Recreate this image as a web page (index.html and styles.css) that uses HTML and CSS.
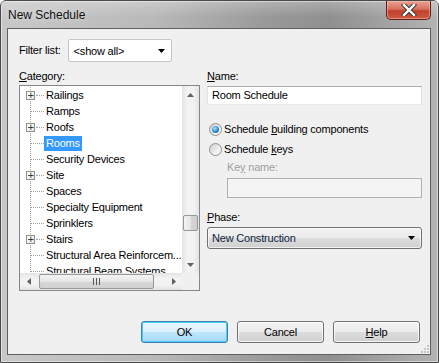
FILE: index.html
```html
<!DOCTYPE html>
<html lang="en">
<head>
    <meta charset="UTF-8">
    <meta name="viewport" content="width=device-width, initial-scale=1.0">
    <title>New Schedule</title>
    <link rel="stylesheet" href="styles.css">
</head>
<body>
    <div class="window">
        <div class="titlebar">
            <span class="title">New Schedule</span>
            <span class="close-btn">
                <svg width="16" height="12" viewBox="0 0 16 12">
                    <path d="M3 1 L13 11 M13 1 L3 11" stroke="#3a3a3a" stroke-width="4.4" stroke-linecap="square"/>
                    <path d="M3 1 L13 11 M13 1 L3 11" stroke="#ffffff" stroke-width="2.4" stroke-linecap="square"/>
                </svg>
            </span>
        </div>
        <div class="client">
            <div class="filter-row">
                <span class="label">Filter list:</span>
                <div class="combo">
                    <span>&lt;show all&gt;</span>
                    <svg class="arrow" width="7" height="4" viewBox="0 0 7 4"><path d="M0 0 H7 L3.5 4 Z" fill="#000"/></svg>
                </div>
            </div>

            <div class="main">
                <div class="left-col">
                    <div class="label cat-label"><u>C</u>ategory:</div>
                    <div class="tree">
                        <div class="tree-view">
                            <div class="tree-rows">
                                <div class="row"><span class="branch"><span class="expander">+</span><span class="hline"></span></span><span class="item">Railings</span></div>
                                <div class="row"><span class="branch leaf"><span class="hline"></span></span><span class="item">Ramps</span></div>
                                <div class="row"><span class="branch"><span class="expander">+</span><span class="hline"></span></span><span class="item">Roofs</span></div>
                                <div class="row"><span class="branch leaf"><span class="hline"></span></span><span class="item selected">Rooms</span></div>
                                <div class="row"><span class="branch leaf"><span class="hline"></span></span><span class="item">Security Devices</span></div>
                                <div class="row"><span class="branch"><span class="expander">+</span><span class="hline"></span></span><span class="item">Site</span></div>
                                <div class="row"><span class="branch leaf"><span class="hline"></span></span><span class="item">Spaces</span></div>
                                <div class="row"><span class="branch leaf"><span class="hline"></span></span><span class="item">Specialty Equipment</span></div>
                                <div class="row"><span class="branch leaf"><span class="hline"></span></span><span class="item">Sprinklers</span></div>
                                <div class="row"><span class="branch"><span class="expander">+</span><span class="hline"></span></span><span class="item">Stairs</span></div>
                                <div class="row"><span class="branch leaf"><span class="hline"></span></span><span class="item">Structural Area Reinforcem...</span></div>
                                <div class="row"><span class="branch leaf"><span class="hline"></span></span><span class="item">Structural Beam Systems</span></div>
                            </div>
                        </div>
                        <div class="vscroll">
                            <span class="sb-btn"><svg width="7" height="4" viewBox="0 0 7 4"><path d="M0 4 H7 L3.5 0 Z" fill="#606060"/></svg></span>
                            <div class="sb-track">
                                <span class="sb-thumb v-thumb" style="margin-top: 112px"></span>
                            </div>
                            <span class="sb-btn"><svg width="7" height="4" viewBox="0 0 7 4"><path d="M0 0 H7 L3.5 4 Z" fill="#606060"/></svg></span>
                        </div>
                        <div class="hscroll">
                            <span class="sb-btn"><svg width="4" height="7" viewBox="0 0 4 7"><path d="M4 0 V7 L0 3.5 Z" fill="#606060"/></svg></span>
                            <div class="sb-track h-track">
                                <span class="sb-thumb h-thumb" style="width: 115px">
                                    <span class="grip-lines"></span>
                                </span>
                            </div>
                            <span class="sb-btn"><svg width="4" height="7" viewBox="0 0 4 7"><path d="M0 0 V7 L4 3.5 Z" fill="#606060"/></svg></span>
                        </div>
                        <div class="corner"></div>
                    </div>
                </div>

                <div class="right-col">
                    <div class="label"><u>N</u>ame:</div>
                    <div class="textbox">Room Schedule</div>

                    <div class="radio-row first">
                        <span class="radio checked"><span class="dot"></span></span>
                        <span>Schedule <u>b</u>uilding components</span>
                    </div>
                    <div class="radio-row">
                        <span class="radio"></span>
                        <span>Schedule <u>k</u>eys</span>
                    </div>

                    <div class="key-block">
                        <div class="label disabled">Ke<u>y</u> name:</div>
                        <div class="textbox disabled-box"></div>
                    </div>

                    <div class="label phase-label"><u>P</u>hase:</div>
                    <div class="dropdown">
                        <span>New Construction</span>
                        <svg class="arrow" width="7" height="4" viewBox="0 0 7 4"><path d="M0 0 H7 L3.5 4 Z" fill="#000"/></svg>
                    </div>
                </div>
            </div>

            <div class="buttons">
                <button class="btn default">OK</button>
                <button class="btn">Cancel</button>
                <button class="btn"><u>H</u>elp</button>
            </div>

            <svg class="size-grip" width="10" height="10" viewBox="0 0 10 10">
                <rect x="8" y="2" width="2" height="2" fill="#c4c4c4"/>
                <rect x="5" y="5" width="2" height="2" fill="#c4c4c4"/>
                <rect x="8" y="5" width="2" height="2" fill="#c4c4c4"/>
                <rect x="2" y="8" width="2" height="2" fill="#c4c4c4"/>
                <rect x="5" y="8" width="2" height="2" fill="#c4c4c4"/>
                <rect x="8" y="8" width="2" height="2" fill="#c4c4c4"/>
            </svg>
        </div>
    </div>
</body>
</html>
```

FILE: styles.css
```css
body {
    margin: 0;
    padding: 0;
    font-family: "Liberation Sans", Arial, sans-serif;
    font-size: 11px;
    letter-spacing: -0.2px;
    color: #000;
    background-color: #ffffff;
}

.window {
    width: 439px;
    height: 363px;
    box-sizing: border-box;
    border: 1px solid #4a4a4a;
    border-radius: 6px 6px 0 0;
    display: flex;
    flex-direction: column;
    background: linear-gradient(to right, #c8c8c8 0%, #b9b9b9 35%, #9a9a9a 60%, #8f8f8f 75%, #b3b3b3 100%);
    box-shadow: inset 0 0 0 1px rgba(255, 255, 255, 0.45);
}

.titlebar {
    height: 27px;
    display: flex;
    align-items: flex-start;
    background: linear-gradient(to bottom, rgba(255, 255, 255, 0.25), rgba(255, 255, 255, 0) 60%);
}

.title {
    margin: 7px 0 0 7px;
    font-size: 12px;
    line-height: 15px;
    letter-spacing: 0;
    color: #111;
    text-shadow: 0 0 6px rgba(255, 255, 255, 0.7);
}

.close-btn {
    margin-left: auto;
    margin-right: 7px;
    width: 45px;
    height: 19px;
    box-sizing: border-box;
    border: 1px solid #5e2219;
    border-top: none;
    border-radius: 0 0 5px 5px;
    background: linear-gradient(to bottom, #e9a394 0%, #d8705e 45%, #c0402b 55%, #cf5a43 100%);
    box-shadow: inset 0 0 0 1px rgba(255, 200, 190, 0.5);
    display: flex;
    align-items: center;
    justify-content: center;
}

.client {
    position: relative;
    flex: 1;
    margin: 0 7px 7px 6px;
    border: 1px solid #5f5f5f;
    background-color: #f0f0f0;
    padding: 10px 8px 0 11px;
    display: flex;
    flex-direction: column;
}

.label {
    line-height: 15px;
}

.filter-row {
    display: flex;
    align-items: center;
    height: 23px;
}

.combo {
    margin-left: 7px;
    width: 104px;
    height: 23px;
    box-sizing: border-box;
    border: 1px solid #c6c6c6;
    border-radius: 2px;
    background-color: #fff;
    display: flex;
    align-items: center;
    padding: 0 6px 0 5px;
}

.combo .arrow,
.dropdown .arrow {
    margin-left: auto;
}

.main {
    display: flex;
    margin-top: 7px;
}

.left-col {
    width: 181px;
}

.cat-label {
    margin-bottom: 1px;
}

.tree {
    height: 206px;
    box-sizing: border-box;
    border: 1px solid #828790;
    background-color: #fff;
    display: grid;
    grid-template-columns: 1fr 17px;
    grid-template-rows: 1fr 17px;
    overflow: hidden;
}

.tree-view {
    overflow: hidden;
    padding-top: 1px;
}

.tree-rows {
    background-image: linear-gradient(to bottom, #a0a0a0 50%, transparent 50%);
    background-size: 1px 2px;
    background-repeat: repeat-y;
    background-position: 10px 0;
}

.row {
    display: flex;
    align-items: center;
    height: 16px;
    white-space: nowrap;
}

.branch {
    width: 24px;
    height: 16px;
    display: flex;
    align-items: center;
    flex-shrink: 0;
}

.expander {
    margin-left: 6px;
    width: 9px;
    height: 9px;
    box-sizing: border-box;
    border: 1px solid #919191;
    background: linear-gradient(135deg, #ffffff, #e6e6e6);
    font-size: 9px;
    line-height: 6px;
    letter-spacing: 0;
    text-align: center;
    color: #1a1a1a;
    font-family: "DejaVu Sans", sans-serif;
}

.hline {
    flex: 1;
    height: 0;
    margin-left: 1px;
    border-top: 1px dotted #a0a0a0;
}

.branch.leaf .hline {
    margin-left: 11px;
}

.item {
    padding: 0 2px;
    line-height: 15px;
}

.item.selected {
    background-color: #3399ff;
    color: #fff;
}

.vscroll,
.hscroll {
    display: flex;
    background: linear-gradient(to right, #e3e3e3, #f2f2f2 30%, #f2f2f2 70%, #e3e3e3);
}

.vscroll {
    flex-direction: column;
}

.hscroll {
    background: linear-gradient(to bottom, #e3e3e3, #f2f2f2 30%, #f2f2f2 70%, #e3e3e3);
}

.sb-btn {
    width: 17px;
    height: 17px;
    flex-shrink: 0;
    display: flex;
    align-items: center;
    justify-content: center;
}

.sb-track {
    flex: 1;
    display: flex;
    flex-direction: column;
}

.h-track {
    flex-direction: row;
    align-items: stretch;
    padding-left: 2px;
}

.sb-thumb {
    box-sizing: border-box;
    border: 1px solid #979797;
    border-radius: 2px;
}

.v-thumb {
    height: 16px;
    margin-left: 1px;
    margin-right: 1px;
    background: linear-gradient(to right, #f4f4f4, #e4e4e4 50%, #d4d4d4 51%, #d0d0d0);
}

.h-thumb {
    margin-top: 1px;
    margin-bottom: 1px;
    background: linear-gradient(to bottom, #f4f4f4, #e6e6e6 50%, #d6d6d6 51%, #d2d2d2);
    display: flex;
    align-items: center;
    justify-content: center;
}

.grip-lines {
    width: 7px;
    height: 7px;
    background-image: linear-gradient(to right, #555 1px, transparent 1px);
    background-size: 3px 7px;
}

.corner {
    background-color: #f0f0f0;
}

.right-col {
    flex: 1;
    margin-left: 7px;
    display: flex;
    flex-direction: column;
}

.textbox {
    margin-top: 2px;
    height: 19px;
    box-sizing: border-box;
    border: 1px solid #abadb3;
    border-color: #abadb3 #dbdfe6 #e3e9ef #e2e3ea;
    background-color: #fff;
    padding-left: 4px;
    line-height: 17px;
}

.radio-row {
    display: flex;
    align-items: center;
    height: 16px;
    margin-top: 4px;
}

.radio-row.first {
    margin-top: 16px;
}

.radio {
    width: 13px;
    height: 13px;
    margin-left: 2px;
    margin-right: 2px;
    box-sizing: border-box;
    border: 1px solid #8e8f8f;
    border-radius: 50%;
    background: linear-gradient(135deg, #cfcfcf, #f4f4f4 70%, #ffffff);
    display: flex;
    align-items: center;
    justify-content: center;
}

.radio .dot {
    width: 7px;
    height: 7px;
    border-radius: 50%;
    background: radial-gradient(circle at 40% 35%, #aee3ff 0%, #3692d8 50%, #13457a 100%);
}

.key-block {
    margin-left: 20px;
    margin-top: 3px;
}

.label.disabled {
    color: #a0a0a0;
}

.disabled-box {
    margin-top: 3px;
    height: 20px;
    background-color: #f4f4f4;
    border-color: #adb2b5;
}

.phase-label {
    margin-top: 12px;
}

.dropdown {
    margin-top: 2px;
    height: 22px;
    box-sizing: border-box;
    border: 1px solid #707070;
    border-radius: 3px;
    background: linear-gradient(to bottom, #f2f2f2 0%, #ebebeb 50%, #dddddd 51%, #cfcfcf 100%);
    box-shadow: inset 0 0 0 1px rgba(255, 255, 255, 0.7);
    display: flex;
    align-items: center;
    padding: 0 6px 0 4px;
    color: #0c2340;
}

.buttons {
    margin-top: auto;
    margin-bottom: 11px;
    margin-right: 2px;
    display: flex;
    justify-content: flex-end;
    gap: 9px;
}

.btn {
    width: 87px;
    height: 22px;
    box-sizing: border-box;
    border: 1px solid #707070;
    border-radius: 3px;
    background: linear-gradient(to bottom, #f2f2f2 0%, #ebebeb 50%, #dddddd 51%, #cfcfcf 100%);
    box-shadow: inset 0 0 0 1px rgba(255, 255, 255, 0.8);
    font-family: "Liberation Sans", Arial, sans-serif;
    font-size: 11px;
    letter-spacing: -0.2px;
    color: #000;
    padding: 0;
}

.btn.default {
    border-color: #3c7fb1;
    background: linear-gradient(to bottom, #eaf6fd 0%, #d9f0fc 50%, #bee6fd 51%, #a7d9f5 100%);
    box-shadow: inset 0 0 0 1px #48d0f6;
}

.size-grip {
    position: absolute;
    right: 1px;
    bottom: 1px;
}
```
